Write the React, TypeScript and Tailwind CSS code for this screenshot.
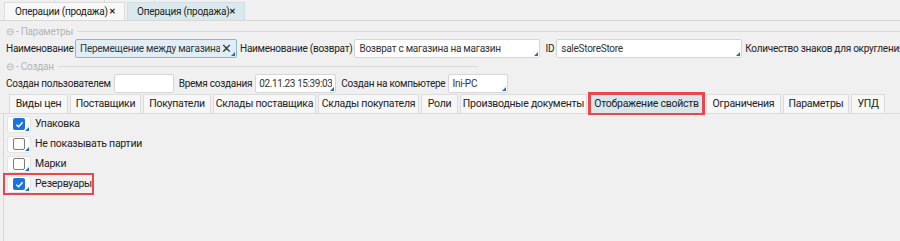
import React from 'react';

const font = { fontFamily: 'Roboto, "Noto Sans", sans-serif' };

function Corner() {
  return (
    <span className="absolute right-[1px] bottom-[1px] w-0 h-0 border-l-[4px] border-l-transparent border-b-[4px] border-b-[#1f6fb5]" />
  );
}

function Field({ w, value, active }: { w: string; value?: string; active?: boolean }) {
  return (
    <div
      className={`relative h-[19px] ${w} shrink-0 rounded-[2px] border flex items-center overflow-hidden whitespace-nowrap text-[#333] ${
        active ? 'bg-[#e1eef6] border-[#89b7d6]' : 'bg-white border-[#d6d6d6]'
      }`}
    >
      <span className="flex-1 overflow-hidden">{value}</span>
      {active && <span className="text-[13px] leading-none text-[#333] ml-[1px]">✕</span>}
      {value !== undefined && value !== '' && <Corner />}
    </div>
  );
}

function Label({ className = '', children }: { className?: string; children: React.ReactNode }) {
  return <span className={`${className} shrink-0 whitespace-nowrap`}>{children}</span>;
}

function Section({ title, lineW }: { title: string; lineW: string }) {
  return (
    <div className="flex items-center h-[16px] pl-[6px] text-[#b4b4b4]">
      <span className="mr-[4px] whitespace-nowrap">⊖ - {title}</span>
      <div className={`h-px bg-[#dadada] ${lineW}`} />
    </div>
  );
}

function Check({ label, checked, hl }: { label: string; checked?: boolean; hl?: boolean }) {
  return (
    <div
      className={`flex items-center h-[20px] self-start ${
        hl ? 'w-[89px] outline outline-2 outline-[#e8474c] -outline-offset-1' : ''
      }`}
    >
      <div className="relative shrink-0 ml-[3px] w-[24px] h-[17px] bg-white rounded-[3px] border border-[#e4e4e4] flex items-center justify-center">
        {checked ? (
          <span className="w-[12px] h-[12px] rounded-[2px] bg-[#1b73e0] flex items-center justify-center">
            <svg width="9" height="9" viewBox="0 0 10 10">
              <path d="M1.5 5.2 L4 7.5 L8.5 2.5" stroke="white" strokeWidth="1.6" fill="none" />
            </svg>
          </span>
        ) : (
          <span className="w-[12px] h-[12px] rounded-[2px] bg-white border border-[#7a7a7a]" />
        )}
        <Corner />
      </div>
      <span className="ml-[4px] whitespace-nowrap text-[10.5px]">{label}</span>
    </div>
  );
}

const tabs: [string, string][] = [
  ['Виды цен', 'w-[59px]'],
  ['Поставщики', 'w-[71px]'],
  ['Покупатели', 'w-[68px]'],
  ['Склады поставщика', 'w-[103px]'],
  ['Склады покупателя', 'w-[101px]'],
  ['Роли', 'w-[37px]'],
  ['Производные документы', 'w-[127px]'],
  ['Отображение свойств', 'w-[113px]'],
  ['Ограничения', 'w-[75px]'],
  ['Параметры', 'w-[66px]'],
  ['УПД', 'w-[34px]'],
];

export default function App() {
  return (
    <div
      className="w-[900px] h-[241px] bg-[#f0f0f0] text-[10px] tracking-[-0.25px] text-[#222] overflow-hidden"
      style={font}
    >
      {/* top tabs */}
      <div className="h-[3px] flex">
        <div className="w-[55px] border-r border-[#dcdcdc]" />
        <div className="w-[50px] border-r border-[#dcdcdc]" />
        <div className="w-[50px] border-r border-[#dcdcdc]" />
      </div>
      <div className="flex items-end h-[18px] pl-[4px] gap-[2px] border-b border-[#d8d8d8] whitespace-nowrap text-[10px]">
        <div className="w-[121px] h-[18px] pl-[10px] pr-[8px] flex items-center justify-between bg-[#f8f8f8] border border-b-0 border-[#dcdcdc]">
          <span>Операции (продажа)</span>
          <span className="font-bold text-[8px]">✕</span>
        </div>
        <div className="w-[118px] h-[18px] pl-[9px] pr-[8px] flex items-center justify-between bg-[#d9e9ee] border border-b-0 border-[#cfdfe4]">
          <span>Операция (продажа)</span>
          <span className="font-bold text-[8px]">✕</span>
        </div>
      </div>

      <div className="pt-[2px]">
        <Section title="Параметры" lineW="flex-1" />
        <div className="flex items-center h-[19px] pl-[6px] gap-[2px] [&>div]:px-[4px]">
          <Label className="w-[67px]">Наименование</Label>
          <Field w="w-[162px]" value="Перемещение между магазинами" active />
          <Label className="ml-[1px]">Наименование (возврат)</Label>
          <Field w="w-[186px]" value="Возврат с магазина на магазин" />
          <Label className="ml-[3px]">ID</Label>
          <Field w="w-[186px]" value="saleStoreStore" />
          <Label className="ml-[1px]">Количество знаков для округления сумм</Label>
        </div>
        <Section title="Создан" lineW="w-[420px]" />
        <div className="flex items-center h-[19px] pl-[6px] gap-[3px] [&>div]:px-[3px]">
          <Label>Создан пользователем</Label>
          <Field w="w-[60px]" value="" />
          <Label className="ml-[2px]">Время создания</Label>
          <Field w="w-[81px] tracking-[-0.4px]" value="02.11.23 15:39:03" />
          <Label className="ml-[2px]">Создан на компьютере</Label>
          <Field w="w-[60px]" value="Ini-PC" />
        </div>
      </div>

      {/* inner tabs */}
      <div className="flex items-end h-[20px] mt-[1px] pl-[9px] gap-[2px] border-b border-[#dcdcdc] text-[10.5px]">
        {tabs.map(([t, w]) => {
          const active = t === 'Отображение свойств';
          return (
            <div
              key={t}
              className={`${w} shrink-0 h-[19px] flex items-center justify-center whitespace-nowrap border border-b-0 ${
                active
                  ? 'bg-[#d7e7eb] border-[#e8474c] outline outline-2 outline-[#e8474c] ml-[1px] mr-[1px]'
                  : 'bg-[#f7f7f7] border-[#dcdcdc]'
              }`}
            >
              {t}
            </div>
          );
        })}
      </div>

      <div className="ml-[3px] border-l border-[#d8d8d8] h-full flex flex-col">
        <Check label="Упаковка" checked />
        <Check label="Не показывать партии" />
        <Check label="Марки" />
        <Check label="Резервуары" checked hl />
      </div>
    </div>
  );
}
